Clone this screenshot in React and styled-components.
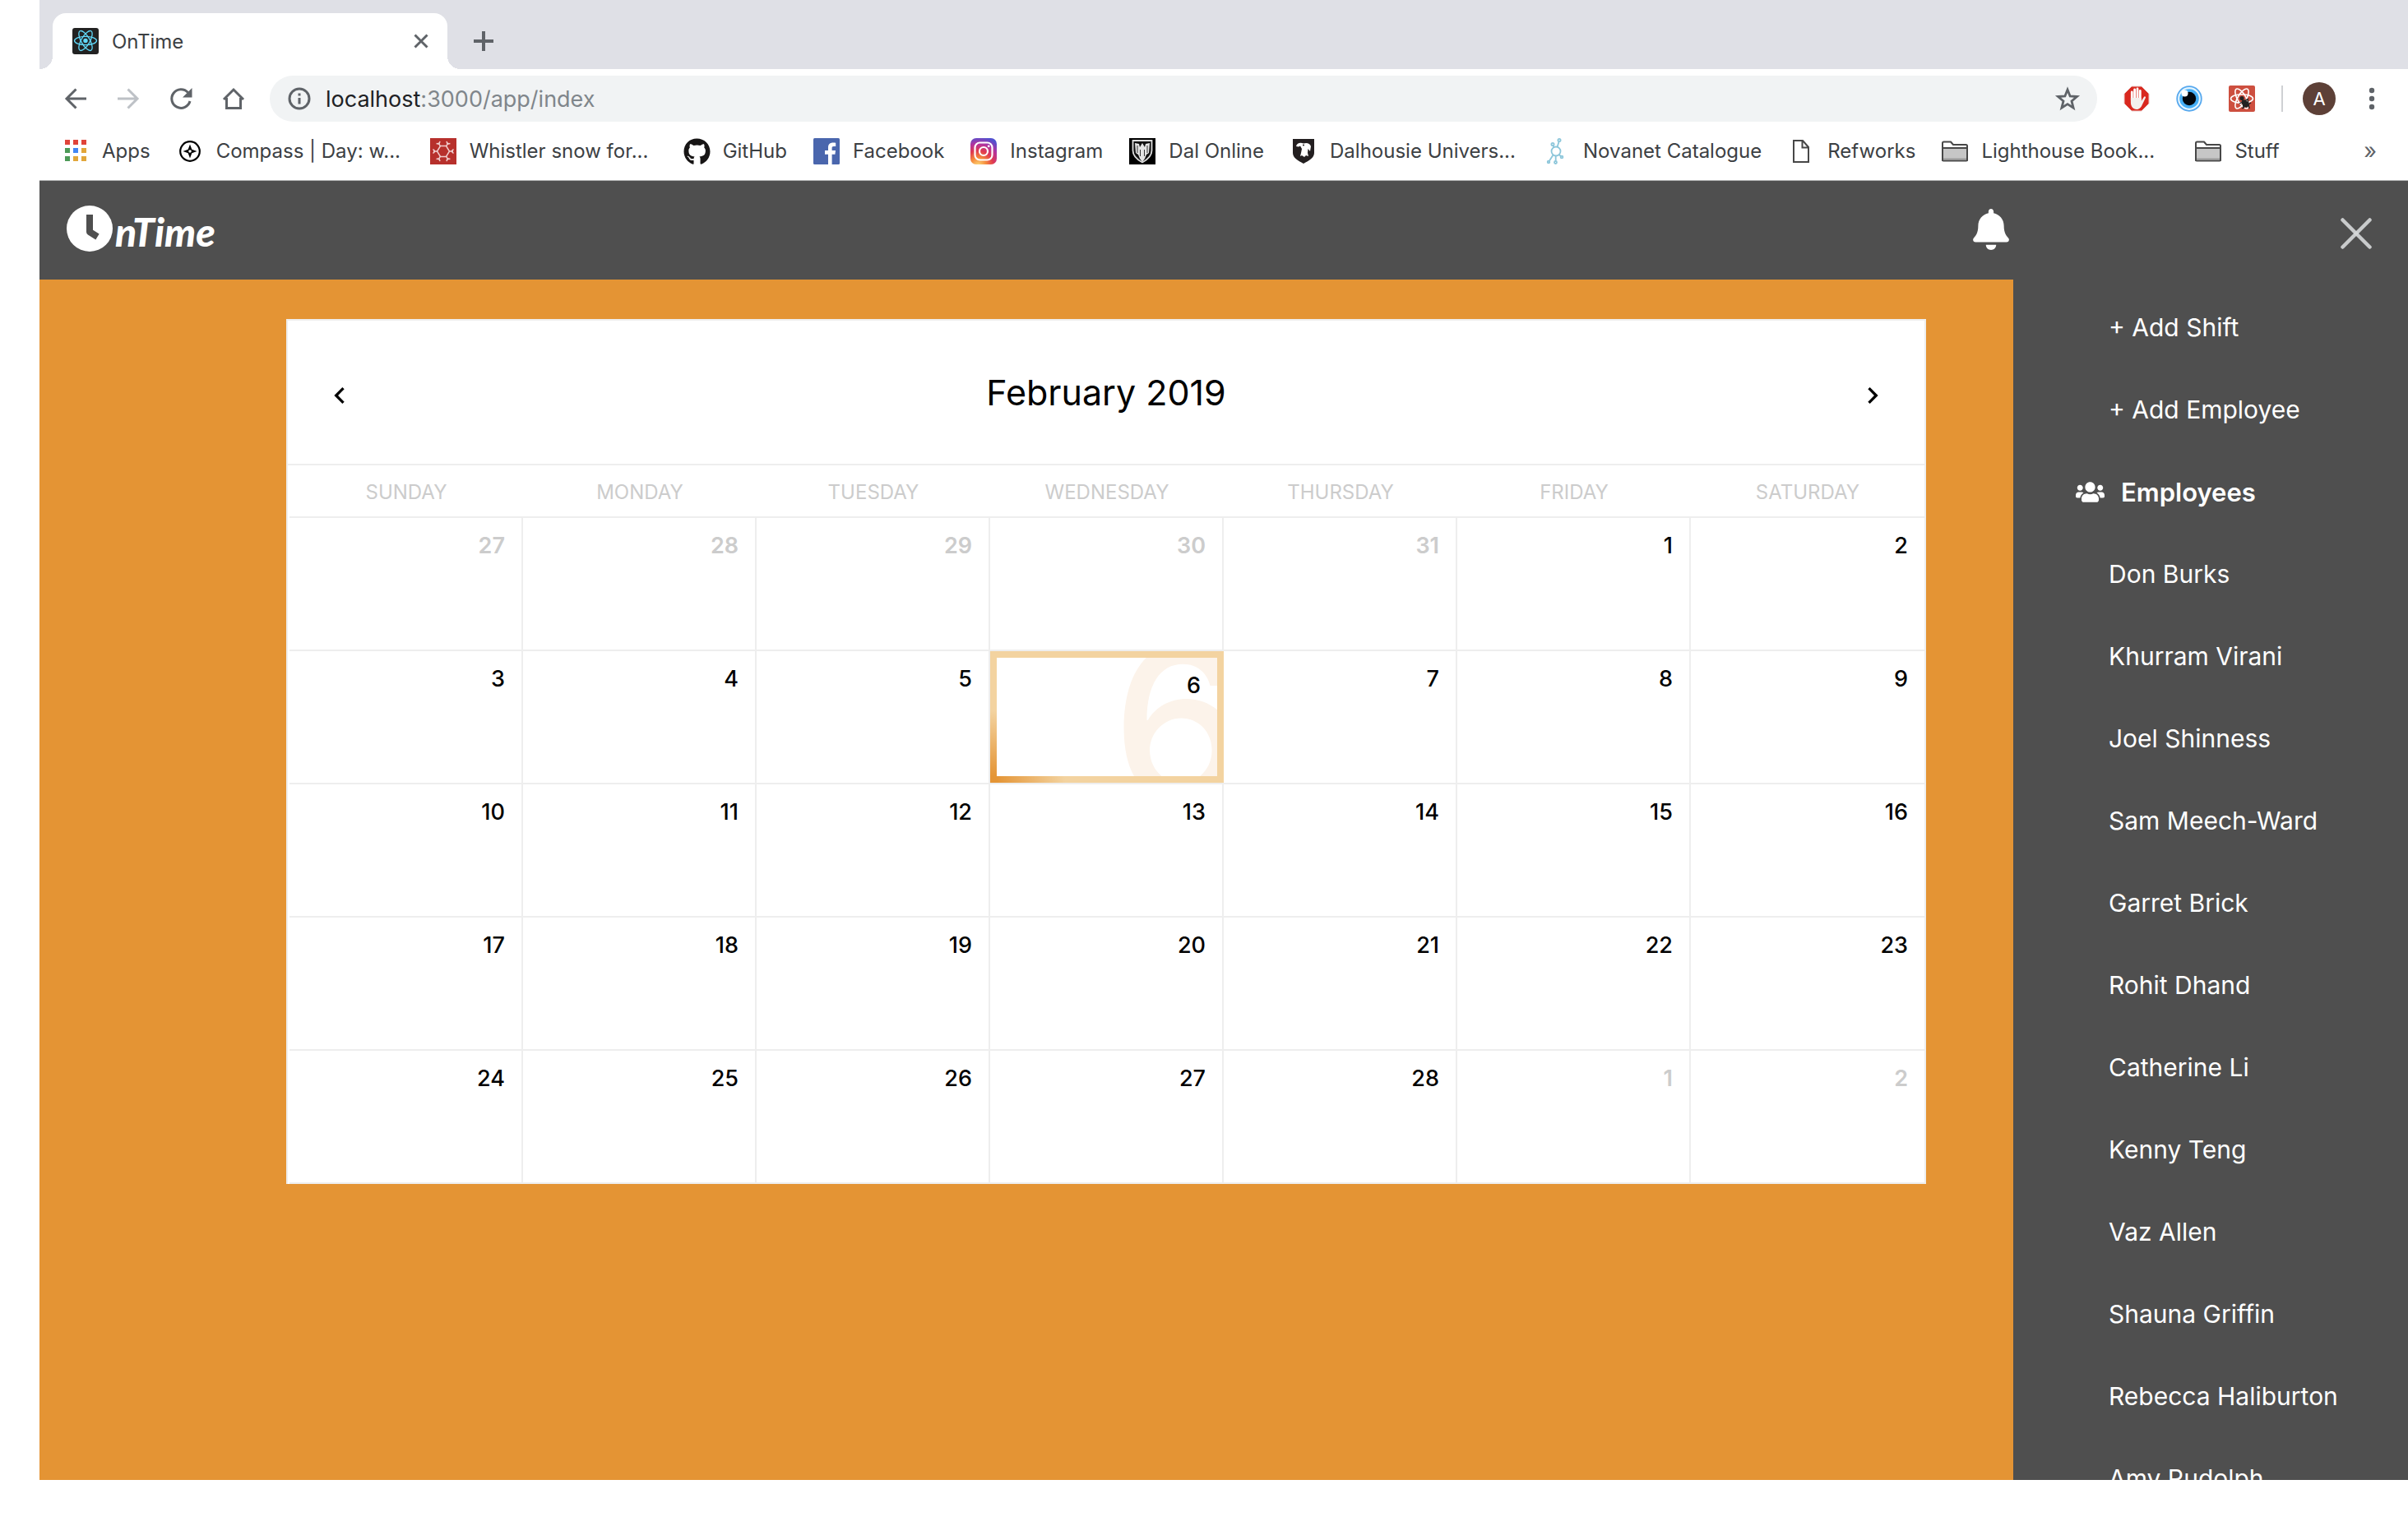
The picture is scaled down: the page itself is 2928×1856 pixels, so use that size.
import React from "react";
import styled, { createGlobalStyle, css } from "styled-components";
import { FaBell, FaGithub, FaUsers } from "react-icons/fa";
import { MdChevronLeft, MdChevronRight } from "react-icons/md";

const colors = {
  slate: "#4f4f4f",
  orange: "#e49434",
  sand: "#f3d3a0",
  line: "#eeeeee",
  muted: "#cccccc",
  strip: "#dfe0e6",
  omnibox: "#f1f3f4",
  icon: "#5f6368",
  chromeText: "#3c4043",
};

const GlobalStyle = createGlobalStyle`
  *, *::before, *::after { box-sizing: border-box; }
  body { margin: 0; background: #fff; font-family: Inter, "Open Sans", sans-serif; }
  button { border: 0; padding: 0; margin: 0; background: none; color: inherit; font: inherit; cursor: pointer; }
  ul { list-style: none; margin: 0; padding: 0; }
  svg { display: block; flex: none; }
`;

const Desktop = styled.div`
  height: 100vh;
  padding: 0 0 56px 48px;
`;

const Window = styled.div`
  height: 100%;
  display: flex;
  flex-direction: column;
  overflow: hidden;
`;

/* ---------- browser chrome ---------- */

const TabStrip = styled.div`
  display: flex;
  align-items: center;
  flex: none;
  height: 84px;
  padding: 16px 16px 0;
  background: ${colors.strip};
`;

const Tab = styled.div`
  position: relative;
  display: flex;
  align-items: center;
  gap: 16px;
  width: 480px;
  height: 68px;
  padding: 0 16px 0 24px;
  border-radius: 16px 16px 0 0;
  background: #fff;
  color: ${colors.chromeText};
  font-size: 24px;

  &::before,
  &::after {
    content: "";
    position: absolute;
    bottom: 0;
    width: 16px;
    height: 16px;
  }
  &::before {
    right: 100%;
    background: radial-gradient(circle at 0 0, transparent 16px, #fff 16px);
  }
  &::after {
    left: 100%;
    background: radial-gradient(circle at 100% 0, transparent 16px, #fff 16px);
  }
`;

const TabTitle = styled.span`
  flex: 1;
`;

const IconButton = styled.button`
  display: grid;
  place-items: center;
  width: 32px;
  height: 32px;
  color: ${(p) => (p.$dim ? "#bdc1c6" : colors.icon)};
`;

const NewTab = styled(IconButton)`
  margin-left: 28px;
`;

const Toolbar = styled.div`
  display: flex;
  align-items: center;
  flex: none;
  gap: 32px;
  height: 72px;
  padding: 0 28px;
`;

const Omnibox = styled.div`
  flex: 1;
  display: flex;
  align-items: center;
  gap: 16px;
  height: 56px;
  margin-left: -4px;
  padding: 0 20px;
  border-radius: 28px;
  background: ${colors.omnibox};
  color: ${colors.icon};
`;

const Address = styled.a`
  flex: 1;
  color: #80868b;
  font-size: 27px;
  text-decoration: none;
`;

const Host = styled.span`
  color: #202124;
`;

const ProfileGroup = styled.div`
  display: flex;
  align-items: center;
  gap: 24px;
  margin-right: -4px;
`;

const Divider = styled.span`
  width: 2px;
  height: 32px;
  background: #cfd1d4;
`;

const Avatar = styled.button`
  width: 40px;
  height: 40px;
  border-radius: 50%;
  background: #5d4037;
  color: #fff;
  font-size: 22px;
`;

const BookmarkBar = styled.nav`
  display: flex;
  align-items: center;
  flex: none;
  height: 64px;
  padding: 0 38px 8px 28px;
  border-bottom: 1px solid #b0b2b2;
`;

const Bookmark = styled.a`
  display: flex;
  align-items: center;
  flex: none;
  gap: 16px;
  width: ${(p) => (p.$long ? "308px" : "auto")};
  padding-right: 32px;
  color: ${colors.chromeText};
  font-size: 24px;
  text-decoration: none;
  white-space: nowrap;
`;

const IconSlot = styled.span`
  display: grid;
  place-items: center;
  width: 32px;
  height: 32px;
`;

const Overflow = styled.button`
  margin-left: auto;
  color: ${colors.icon};
  font-size: 27px;
`;

/* ---------- application ---------- */

const AppFrame = styled.div`
  flex: 1;
  min-height: 0;
  display: grid;
  grid-template-columns: minmax(0, 1fr) 480px;
`;

const MainColumn = styled.div`
  display: flex;
  flex-direction: column;
  background: ${colors.orange};
`;

const Header = styled.header`
  display: flex;
  align-items: center;
  justify-content: space-between;
  flex: none;
  height: 120px;
  padding: 0 2px 4px 33px;
  background: ${colors.slate};
  color: #fff;
`;

const Logo = styled.a`
  display: flex;
  align-items: center;
  gap: 3px;
  color: #fff;
  text-decoration: none;
`;

const LogoText = styled.span`
  padding-top: 8px;
  font-family: Lato, sans-serif;
  font-size: 48px;
  font-style: italic;
  font-weight: 900;
  line-height: 48px;
`;

const BellButton = styled.button`
  padding-top: 2px;
  color: #fff;
`;

const Content = styled.main`
  padding: 48px 106px 48px 300px;
`;

const Calendar = styled.section`
  border: 2px solid ${colors.line};
  border-bottom: 0;
  background: #fff;
`;

const MonthBar = styled.div`
  display: flex;
  align-items: center;
  justify-content: space-between;
  height: 176px;
  padding: 0 43px;
  border-bottom: 2px solid ${colors.line};
`;

const MonthTitle = styled.h1`
  margin: 0;
  font-size: 43px;
  font-weight: 400;
  line-height: 48px;
`;

const NavButton = styled.button`
  padding-top: 8px;
`;

const Grid = styled.table`
  width: 100%;
  padding-left: 2px;
  table-layout: fixed;
  border-collapse: separate;
  border-spacing: 0;
`;

const Weekday = styled.th`
  height: 64px;
  padding: 2px 0 0;
  border-bottom: 2px solid ${colors.line};
  color: ${colors.muted};
  font-size: 24px;
  font-weight: 400;
  text-transform: uppercase;
`;

const Day = styled.td`
  position: relative;
  height: 162px;
  padding: 16px 20px;
  border-right: 2px solid ${colors.line};
  border-bottom: 2px solid ${colors.line};
  color: ${(p) => (p.$outside ? colors.muted : "#000")};
  font-size: 27px;
  font-weight: ${(p) => (p.$outside ? 600 : 500)};
  line-height: 36px;
  text-align: right;
  vertical-align: top;

  &:last-child {
    border-right: 0;
  }

  ${(p) =>
    p.$today &&
    css`
      padding: 24px 26px;
    `}
`;

const TodayFrame = styled.span`
  position: absolute;
  inset: 0 -2px 0 0;
  overflow: hidden;
  border: 8px solid;
  border-image: linear-gradient(45deg, ${colors.orange} 0%, ${colors.sand} 20%) 1;
`;

const Watermark = styled.span`
  position: absolute;
  top: -50px;
  right: -36px;
  color: #fcf3ea;
  font-size: 260px;
  font-weight: 500;
  line-height: 1;
`;

const DayNumber = styled.span`
  position: relative;
`;

const Sidebar = styled.aside`
  display: flex;
  flex-direction: column;
  min-height: 0;
  overflow: hidden;
  background: ${colors.slate};
  color: #fff;
`;

const SidebarTop = styled.div`
  display: flex;
  align-items: flex-start;
  justify-content: flex-end;
  flex: none;
  height: 128px;
  padding: 45px 44px 0;
`;

const Menu = styled.ul`
  display: grid;
  grid-auto-rows: 100px;
`;

const MenuItem = styled.li`
  display: flex;
  align-items: center;
  padding-left: 116px;
`;

const MenuLink = styled.a`
  color: #fff;
  font-size: 30px;
  font-weight: 400;
  text-decoration: none;
  white-space: nowrap;
`;

const SectionItem = styled.li`
  display: flex;
  align-items: center;
  gap: 20px;
  padding-left: 76px;
`;

const SectionTitle = styled.h2`
  margin: 0;
  font-size: 31px;
  font-weight: 600;
`;

/* ---------- drawings ---------- */

const stroke = { fill: "none", stroke: "currentColor", strokeWidth: 3 };

const AtomIcon = () => (
  <svg width="32" height="32" viewBox="0 0 32 32">
    <rect width="32" height="32" rx="3" fill="#222" />
    <g fill="none" stroke="#61dafb" strokeWidth="1.3">
      <ellipse cx="16" cy="15.500" rx="13.500" ry="5.200" />
      <ellipse cx="16" cy="15.500" rx="13.500" ry="5.200" transform="rotate(60 16 15.500)" />
      <ellipse cx="16" cy="15.500" rx="13.500" ry="5.200" transform="rotate(120 16 15.500)" />
    </g>
    <circle cx="16" cy="15.500" r="2.700" fill="#61dafb" />
  </svg>
);

const BackIcon = () => (
  <svg width="32" height="32" viewBox="0 0 32 32" {...stroke}>
    <path d="M29 16H5M16.500 4.500L5 16l11.500 11.500" />
  </svg>
);

const ForwardIcon = () => (
  <svg width="32" height="32" viewBox="0 0 32 32" {...stroke}>
    <path d="M3 16h24M15.500 4.500L27 16 15.500 27.500" />
  </svg>
);

const HomeIcon = () => (
  <svg width="32" height="32" viewBox="0 0 32 32" {...stroke}>
    <path d="M4 17L16 5l12 12M7.500 15v12.500h17V15" />
  </svg>
);

const ReloadIcon = () => (
  <svg width="32" height="32" viewBox="0 0 32 32" {...stroke}>
    <path d="M24.500 8.500A11.300 11.300 0 1 0 27 19" />
    <path d="M29.500 3v11.500H18z" fill="currentColor" stroke="none" />
  </svg>
);

const CrossIcon = () => (
  <svg width="32" height="32" viewBox="0 0 32 32" {...stroke}>
    <path d="M8.500 8.500l15 15M23.500 8.500l-15 15" />
  </svg>
);

const PlusIcon = () => (
  <svg width="32" height="32" viewBox="0 0 32 32" {...stroke} strokeWidth="4">
    <path d="M16 4v24M4 16h24" />
  </svg>
);

const InfoIcon = () => (
  <svg width="32" height="32" viewBox="0 0 32 32" {...stroke}>
    <circle cx="16" cy="16" r="12" />
    <path d="M16 15v7.500M16 9.500v3" />
  </svg>
);

const StarIcon = () => (
  <svg width="32" height="32" viewBox="0 0 32 32" {...stroke} strokeWidth="2.800">
    <path d="M16 5l3.100 7.900 8.400.6-6.500 5.400 2.100 8.200L16 22.600l-7.100 4.500 2.100-8.200-6.500-5.400 8.400-.6z" />
  </svg>
);

const DotsIcon = () => (
  <svg width="32" height="32" viewBox="0 0 32 32" fill="currentColor">
    <circle cx="16" cy="6" r="3.200" />
    <circle cx="16" cy="16" r="3.200" />
    <circle cx="16" cy="26" r="3.200" />
  </svg>
);

const BlockerIcon = () => (
  <svg width="32" height="32" viewBox="0 0 32 32">
    <path d="M10 1h12l9 9v12l-9 9H10l-9-9V10z" fill="#d9281f" stroke="#eac9c6" />
    <g fill="none" stroke="#fff" strokeWidth="2.800" strokeLinecap="round">
      <path d="M10.300 18V8M13.600 17V5M17 17V4M20.300 18V6.500" />
    </g>
    <path d="M8.900 15h12.800v4l3-4.800c1-1.600 2.800-.8 2.200.9L23 23c-1.500 3.600-3.500 6-7 6-4.500 0-7.100-4-7.100-8.500z" fill="#f3f0ee" />
  </svg>
);

const EyeIcon = () => (
  <svg width="32" height="32" viewBox="0 0 32 32">
    <circle cx="16" cy="16" r="14.800" fill="#e4f5ff" stroke="#56a8ee" strokeWidth="1.800" />
    <circle cx="16" cy="16" r="11.800" fill="#45aef5" />
    <circle cx="16" cy="16" r="8.200" fill="#00060c" />
    <circle cx="10.500" cy="9.500" r="4" fill="#fff" />
  </svg>
);

const ReactToolsIcon = () => (
  <svg width="32" height="32" viewBox="0 0 32 32">
    <rect width="32" height="32" rx="2" fill="#cd4f3f" />
    <g fill="none" stroke="#fff" strokeWidth="1.600">
      <ellipse cx="16" cy="16" rx="13.500" ry="5.200" />
      <ellipse cx="16" cy="16" rx="13.500" ry="5.200" transform="rotate(60 16 16)" />
      <ellipse cx="16" cy="16" rx="13.500" ry="5.200" transform="rotate(120 16 16)" />
    </g>
    <circle cx="16" cy="15.500" r="2.600" fill="#222" />
    <ellipse cx="20" cy="22" rx="3.600" ry="5.200" fill="#222" transform="rotate(-40 20 22)" />
    <path d="M13 22l11-6M16 28l11-7M17 16l1 12M23 17l2 11" stroke="#222" strokeWidth="1.400" />
  </svg>
);

const AppsIcon = () => {
  const fills = ["#e0443a", "#e0443a", "#e0443a", "#4c9a57", "#4286f4", "#e2a63a", "#4c9a57", "#e2a63a", "#e2a63a"];
  return (
    <svg width="32" height="32" viewBox="0 0 32 32">
      {fills.map((fill, i) => (
        <rect key={i} x={3 + (i % 3) * 10} y={2 + Math.floor(i / 3) * 10} width="6" height="6" fill={fill} />
      ))}
    </svg>
  );
};

const CompassIcon = () => (
  <svg width="32" height="32" viewBox="0 0 32 32">
    <circle cx="16" cy="16" r="11.800" fill="none" stroke="#000" strokeWidth="2.200" />
    <path d="M16 7.500l2.300 6.200 6.200 2.300-6.200 2.300L16 24.500l-2.300-6.200L7.500 16l6.200-2.300z" />
    <circle cx="16" cy="16" r="1.800" fill="#fff" />
  </svg>
);

const SnowIcon = () => (
  <svg width="32" height="32" viewBox="0 0 32 32">
    <rect width="32" height="32" fill="#b7302c" />
    <g fill="none" stroke="#f0cccc" strokeWidth="1.500">
      <path d="M12.500 9.500h7l4 6.500-4 6.500h-7l-4-6.500z" />
      {[30, 90, 150, 210, 270, 330].map((a) => (
        <path key={a} d="M16 8.500V4M13.500 3.500l2.500 2.500 2.500-2.500" transform={`rotate(${a} 16 16)`} />
      ))}
    </g>
  </svg>
);

const FacebookIcon = () => (
  <svg width="32" height="32" viewBox="0 0 32 32">
    <rect width="32" height="32" rx="1.500" fill="#4a66ad" />
    <path d="M18 32V19.800h-4v-4.900h4v-3.600c0-3.700 2.200-5.800 6-5.800 1.500 0 2.800.1 3.200.2v4.400h-2.300c-1.900 0-2.300.9-2.300 2.200v2.600h4.400l-.6 4.900h-3.800V32z" fill="#fff" />
  </svg>
);

const InstagramIcon = () => (
  <svg width="32" height="32" viewBox="0 0 32 32">
    <defs>
      <radialGradient id="insta" cx=".3" cy="1.05" r="1.1">
        <stop offset="0" stopColor="#fddc7a" />
        <stop offset=".28" stopColor="#f58a3c" />
        <stop offset=".52" stopColor="#e0394f" />
        <stop offset=".76" stopColor="#b233a0" />
        <stop offset="1" stopColor="#5250cf" />
      </radialGradient>
    </defs>
    <rect width="32" height="32" rx="7" fill="url(#insta)" />
    <g fill="none" stroke="#fff" strokeWidth="2.200">
      <rect x="5.500" y="5.500" width="21" height="21" rx="6" />
      <circle cx="16" cy="16" r="5" />
    </g>
    <circle cx="22.200" cy="9.800" r="1.400" fill="#fff" />
  </svg>
);

const CrestIcon = () => (
  <svg width="32" height="32" viewBox="0 0 32 32">
    <rect width="32" height="32" />
    <path d="M4.500 3h23v12c0 7-5 11-11.500 14.500C9.500 26 4.500 22 4.500 15z" fill="#111" stroke="#ddd" strokeWidth="1.800" />
    <path d="M7 6l5 1 1 4 3-5 3 5 1-4 5-1-1 12-3 2-2 5-3 4-3-4-2-5-3-2z" fill="#e4e4e4" />
    <path d="M10 9v9M22 9v9M13.500 14v8M18.500 14v8" stroke="#333" />
  </svg>
);

const ShieldIcon = () => (
  <svg width="32" height="32" viewBox="0 0 32 32">
    <path d="M3 1h26v17c0 6-6 9-13 13C9 27 3 24 3 18z" fill="#231f20" />
    <path d="M7 10c1-4 5-5 9-3.500 4-1.500 8 0 9 3.500l-1 6-2.500-3-.5 5 1 4-3-1-2 2-3-2-2 1 1-4 1-5-2-3.500-2 1z" fill="#fff" />
    <circle cx="16" cy="8.500" r="1" fill="#231f20" />
  </svg>
);

const NovanetIcon = () => (
  <svg width="32" height="32" viewBox="0 0 32 32" fill="none" stroke="#8cc6da" strokeWidth="1.800">
    <circle cx="15" cy="16" r="5.500" />
    <circle cx="19" cy="2.500" r="1.600" />
    <circle cx="11" cy="7.500" r="1.600" />
    <circle cx="6" cy="29" r="1.300" />
    <circle cx="14.500" cy="29.500" r="1.500" />
    <circle cx="22" cy="23" r="1.400" />
    <path d="M18.500 4.500L16.500 11M11.500 9l1 2.500M11.500 20.500L7 27.500M14.700 21.500v6M18.500 20l2.500 2" />
  </svg>
);

const PageIcon = () => (
  <svg width="32" height="32" viewBox="0 0 32 32" fill="none" stroke="#474747" strokeWidth="2">
    <path d="M7 3h11l7 8v18H7zM17.500 3v8.500H25" />
  </svg>
);

const FolderIcon = () => (
  <svg width="32" height="32" viewBox="0 0 32 32" stroke="#474747" strokeWidth="2" strokeLinejoin="round">
    <path d="M1 27V6q0-1.500 1.500-1.500H11l3 3.500h15.500q1.500 0 1.500 1.500V27z" fill="#fff" />
    <path d="M1 12h30v14.500q0 1-1 1H2q-1 0-1-1z" fill="#c6c6c6" />
    <path d="M2 25.500h28" stroke="#9c9c9c" />
  </svg>
);

const ClockIcon = () => (
  <svg width="56" height="56" viewBox="0 0 56 56">
    <circle cx="28" cy="28" r="28" fill="#fff" />
    <path d="M28 11v21l9.500 6" fill="none" stroke={colors.slate} strokeWidth="8" strokeLinejoin="round" />
  </svg>
);

const CloseMenuIcon = () => (
  <svg width="38" height="38" viewBox="0 0 38 38" stroke="#d6d8d9" strokeOpacity=".9" strokeWidth="4.500" strokeLinecap="round">
    <path d="M2.500 2.500l33 33" />
    <path d="M35.500 2.500l-33 33" />
  </svg>
);

/* ---------- data ---------- */

const bookmarks = [
  { label: "Apps", Icon: AppsIcon },
  { label: "Compass | Day: w...", Icon: CompassIcon, long: true },
  { label: "Whistler snow for...", Icon: SnowIcon, long: true },
  { label: "GitHub", Icon: () => <FaGithub size={33} color="#171515" /> },
  { label: "Facebook", Icon: FacebookIcon },
  { label: "Instagram", Icon: InstagramIcon },
  { label: "Dal Online", Icon: CrestIcon },
  { label: "Dalhousie Univers...", Icon: ShieldIcon, long: true },
  { label: "Novanet Catalogue", Icon: NovanetIcon },
  { label: "Refworks", Icon: PageIcon },
  { label: "Lighthouse Book...", Icon: FolderIcon, long: true },
  { label: "Stuff", Icon: FolderIcon },
];

const weekdays = ["Sunday", "Monday", "Tuesday", "Wednesday", "Thursday", "Friday", "Saturday"];

const firstDay = new Date(2019, 0, 27);
const weeks = Array.from({ length: 5 }, (_, w) =>
  Array.from({ length: 7 }, (_, d) => {
    const date = new Date(firstDay);
    date.setDate(firstDay.getDate() + w * 7 + d);
    const inMonth = date.getMonth() === 1;
    return { day: date.getDate(), outside: !inMonth, today: inMonth && date.getDate() === 6 };
  })
);

const employees = [
  "Don Burks",
  "Khurram Virani",
  "Joel Shinness",
  "Sam Meech-Ward",
  "Garret Brick",
  "Rohit Dhand",
  "Catherine Li",
  "Kenny Teng",
  "Vaz Allen",
  "Shauna Griffin",
  "Rebecca Haliburton",
  "Amy Rudolph",
];

const BrowserChrome = () => (
  <>
    <TabStrip>
      <Tab>
        <AtomIcon />
        <TabTitle>OnTime</TabTitle>
        <IconButton aria-label="Close tab">
          <CrossIcon />
        </IconButton>
      </Tab>
      <NewTab aria-label="New tab">
        <PlusIcon />
      </NewTab>
    </TabStrip>
    <Toolbar>
      <IconButton aria-label="Back"><BackIcon /></IconButton>
      <IconButton aria-label="Forward" $dim><ForwardIcon /></IconButton>
      <IconButton aria-label="Reload"><ReloadIcon /></IconButton>
      <IconButton aria-label="Home"><HomeIcon /></IconButton>
      <Omnibox>
        <InfoIcon />
        <Address href="#address"><Host>localhost</Host>:3000/app/index</Address>
        <IconButton aria-label="Bookmark this page"><StarIcon /></IconButton>
      </Omnibox>
      <IconButton aria-label="Ad blocker"><BlockerIcon /></IconButton>
      <IconButton aria-label="Eye extension"><EyeIcon /></IconButton>
      <IconButton aria-label="React tools"><ReactToolsIcon /></IconButton>
      <ProfileGroup>
        <Divider />
        <Avatar aria-label="Profile">A</Avatar>
      </ProfileGroup>
      <IconButton aria-label="Browser menu"><DotsIcon /></IconButton>
    </Toolbar>
    <BookmarkBar>
      {bookmarks.map(({ label, Icon, long }) => (
        <Bookmark key={label} href="#bookmark" $long={long}>
          <IconSlot><Icon /></IconSlot>
          {label}
        </Bookmark>
      ))}
      <Overflow aria-label="More bookmarks">»</Overflow>
    </BookmarkBar>
  </>
);

const MonthCalendar = () => (
  <Calendar>
    <MonthBar>
      <NavButton aria-label="Previous month"><MdChevronLeft size={40} /></NavButton>
      <MonthTitle>February 2019</MonthTitle>
      <NavButton aria-label="Next month"><MdChevronRight size={40} /></NavButton>
    </MonthBar>
    <Grid>
      <thead>
        <tr>
          {weekdays.map((name) => (
            <Weekday key={name} scope="col">{name}</Weekday>
          ))}
        </tr>
      </thead>
      <tbody>
        {weeks.map((week, i) => (
          <tr key={i}>
            {week.map(({ day, outside, today }) => (
              <Day key={day} $outside={outside} $today={today}>
                {today && (
                  <TodayFrame aria-hidden="true">
                    <Watermark>{day}</Watermark>
                  </TodayFrame>
                )}
                <DayNumber>{day}</DayNumber>
              </Day>
            ))}
          </tr>
        ))}
      </tbody>
    </Grid>
  </Calendar>
);

const SideMenu = () => (
  <Sidebar>
    <SidebarTop>
      <button aria-label="Close menu"><CloseMenuIcon /></button>
    </SidebarTop>
    <Menu>
      <MenuItem><MenuLink href="#shift">+ Add Shift</MenuLink></MenuItem>
      <MenuItem><MenuLink href="#employee">+ Add Employee</MenuLink></MenuItem>
      <SectionItem>
        <FaUsers size={35} />
        <SectionTitle>Employees</SectionTitle>
      </SectionItem>
      {employees.map((name) => (
        <MenuItem key={name}><MenuLink href="#profile">{name}</MenuLink></MenuItem>
      ))}
    </Menu>
  </Sidebar>
);

export default function App() {
  return (
    <Desktop>
      <GlobalStyle />
      <Window>
        <BrowserChrome />
        <AppFrame>
          <MainColumn>
            <Header>
              <Logo href="#home" aria-label="OnTime">
                <ClockIcon />
                <LogoText>nTime</LogoText>
              </Logo>
              <BellButton aria-label="Notifications"><FaBell size={50} /></BellButton>
            </Header>
            <Content>
              <MonthCalendar />
            </Content>
          </MainColumn>
          <SideMenu />
        </AppFrame>
      </Window>
    </Desktop>
  );
}
